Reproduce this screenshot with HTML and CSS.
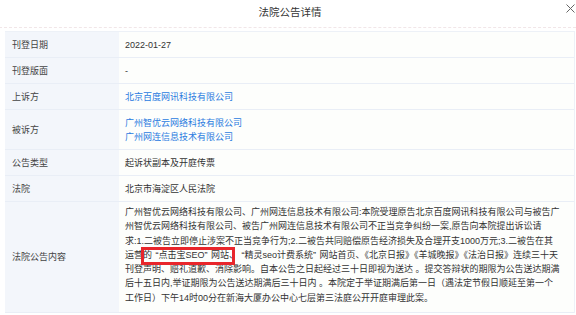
FILE: index.html
```html
<!DOCTYPE html>
<html lang="zh-CN">
<head>
<meta charset="utf-8">
<link rel="stylesheet" href="styles.css">
</head>
<body>
<div class="dialog">
  <div class="header">
    <span class="title">法院公告详情</span>
    <svg class="close" width="9" height="9" viewBox="0 0 9 9"><path d="M0.5 0.5L8.5 8.5M8.5 0.5L0.5 8.5" stroke="#666" stroke-width="1" fill="none"/></svg>
  </div>
  <div class="divider"></div>
  <div class="table">
    <div class="label">刊登日期</div>
    <div class="value">2022-01-27</div>
    <div class="label">刊登版面</div>
    <div class="value">-</div>
    <div class="label">上诉方</div>
    <div class="value"><span class="link">北京百度网讯科技有限公司</span></div>
    <div class="label">被诉方</div>
    <div class="value"><span class="link">广州智优云网络科技有限公司</span><br><span class="link">广州网连信息技术有限公司</span></div>
    <div class="label">公告类型</div>
    <div class="value">起诉状副本及开庭传票</div>
    <div class="label">法院</div>
    <div class="value">北京市海淀区人民法院</div>
    <div class="label">法院公告内容</div>
    <div class="value content">广州智优云网络科技有限公司、广州网连信息技术有限公司:本院受理原告北京百度网讯科技有限公司与被告广<br>州智优云网络科技有限公司、被告广州网连信息技术有限公司不正当竞争纠纷一案,原告向本院提出诉讼请<br>求:1.二被告立即停止涉案不正当竞争行为;2.二被告共同赔偿原告经济损失及合理开支1000万元;3.二被告在其<br>运营的<span class="qo">“</span>点击宝SEO<span class="qc">”</span>网站、<span class="qo">“</span>精灵seo计费系统<span class="qc">”</span>网站首页、《北京日报》《羊城晚报》《法治日报》连续三十天<br>刊登声明、赔礼道歉、消除影响。自本公告之日起经过三十日即视为送达 。提交答辩状的期限为公告送达期满<br>后十五日内,举证期限为公告送达期满后三十日内 。本院定于举证期满后第一日（遇法定节假日顺延至第一个<br>工作日）下午14时00分在新海大厦办公中心七层第三法庭公开开庭审理此案。<div class="highlight"></div></div>
  </div>
</div>
</body>
</html>
```
FILE: styles.css
```css
html, body {
  margin: 0;
  padding: 0;
  background: #ffffff;
}
body {
  font-family: "Liberation Sans", "Noto Sans CJK SC", sans-serif;
  color: #333;
  width: 576px;
  height: 315px;
  overflow: hidden;
}
.dialog {
  padding: 0 1px 0 5px;
}
.header {
  position: relative;
  height: 27px;
  display: flex;
  justify-content: center;
  align-items: flex-start;
}
.title {
  font-size: 10.5px;
  line-height: 14px;
  margin-top: 5px;
  color: #333;
}
.close {
  position: absolute;
  right: 0;
  top: 4px;
}
.divider {
  border-top: 1px dashed #f1e6e8;
  margin: 0 -6px 3px -6px;
}
.table {
  display: grid;
  grid-template-columns: 114px 1fr;
  border-top: 1px solid #edf1f7;
  border-right: 1px solid #edf1f7;
  font-size: 9px;
  line-height: 14px;
}
.label {
  background: #f3f6fb;
  color: #444;
  padding: 5.5px 7px;
  border-bottom: 1px solid #e9eef6;
  display: flex;
  align-items: center;
}
.value {
  background: #fdfefc;
  padding: 5.5px 6px;
  border-bottom: 1px solid #e9eef6;
  color: #333;
}
.link {
  color: #2a7be0;
}
.content {
  position: relative;
  padding-top: 3px;
  padding-bottom: 7px;
  line-height: 14.3px;
  white-space: nowrap;
}
.qo {
  margin-left: 3.5px;
}
.qc {
  margin-right: 3.5px;
}
.highlight {
  position: absolute;
  left: 22px;
  top: 45px;
  width: 88px;
  height: 12px;
  border: 3px solid #e8262b;
}
```
